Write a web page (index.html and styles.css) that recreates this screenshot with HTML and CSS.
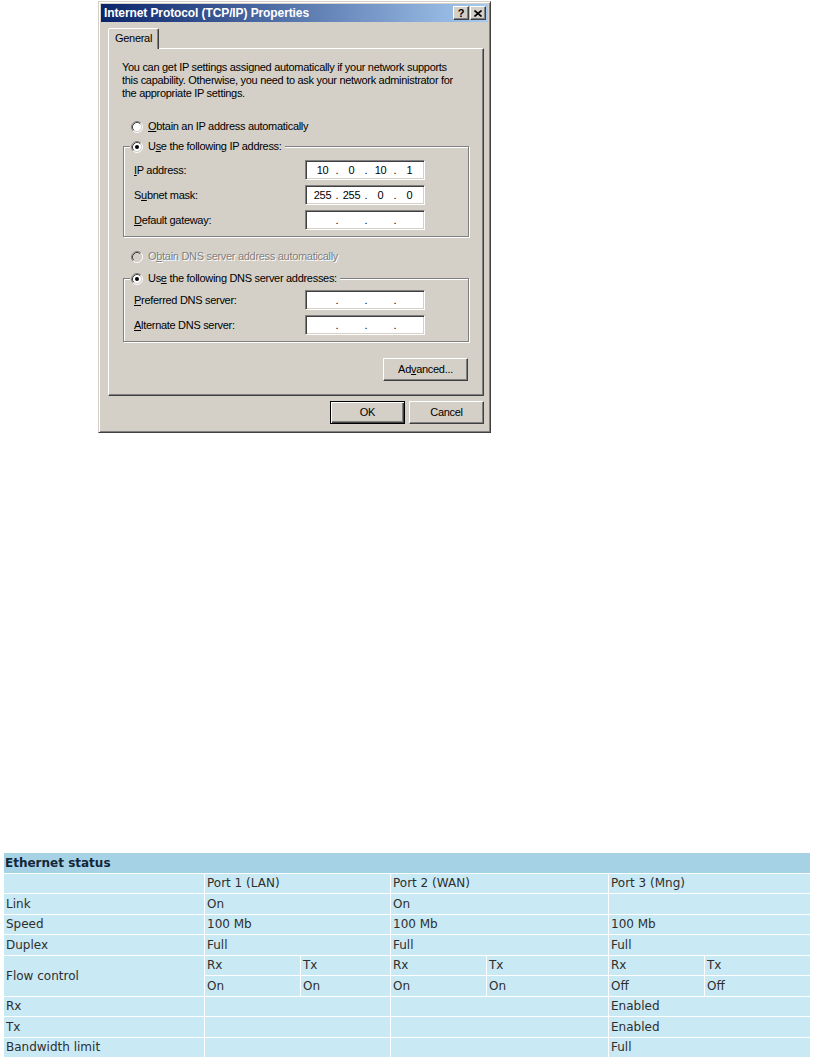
FILE: index.html
```html
<!DOCTYPE html>
<html>

<head>
    <title>Internet Protocol (TCP/IP) Properties</title>
    <link rel="stylesheet" href="styles.css">
</head>

<body>
    <div class="dialog">
        <div class="titlebar">
            <span class="title">Internet Protocol (TCP/IP) Properties</span>
            <span class="title-btns">
                <span class="tbtn help">?</span>
                <span class="tbtn">
                    <svg width="8" height="7" viewBox="0 0 8 7">
                        <path d="M0.5 0.5 L7.5 6.5 M7.5 0.5 L0.5 6.5" stroke="#000" stroke-width="1.6" fill="none" />
                    </svg>
                </span>
            </span>
        </div>

        <div class="dlg-body">
            <div class="tabs">
                <div class="tab">General</div>
            </div>

            <div class="panel">
                <p class="intro">
                    You can get IP settings assigned automatically if your network supports<br>
                    this capability. Otherwise, you need to ask your network administrator for<br>
                    the appropriate IP settings.
                </p>

                <div class="radio-row">
                    <svg class="radio" width="12" height="12" viewBox="0 0 12 12">
                        <circle cx="6" cy="6" r="4.5" fill="#fff" />
                        <path d="M2.11 9.89 A5.5 5.5 0 0 1 9.89 2.11" stroke="#808080" fill="none" />
                        <path d="M9.89 2.11 A5.5 5.5 0 0 1 2.11 9.89" stroke="#fff" fill="none" />
                        <path d="M2.82 9.18 A4.5 4.5 0 0 1 9.18 2.82" stroke="#404040" fill="none" />
                        <path d="M9.18 2.82 A4.5 4.5 0 0 1 2.82 9.18" stroke="#d4d0c8" fill="none" />
                    </svg>
                    <span><u>O</u>btain an IP address automatically</span>
                </div>

                <div class="group first">
                    <div class="group-head">
                        <svg class="radio" width="12" height="12" viewBox="0 0 12 12">
                            <circle cx="6" cy="6" r="4.5" fill="#fff" />
                            <path d="M2.11 9.89 A5.5 5.5 0 0 1 9.89 2.11" stroke="#808080" fill="none" />
                            <path d="M9.89 2.11 A5.5 5.5 0 0 1 2.11 9.89" stroke="#fff" fill="none" />
                            <path d="M2.82 9.18 A4.5 4.5 0 0 1 9.18 2.82" stroke="#404040" fill="none" />
                            <path d="M9.18 2.82 A4.5 4.5 0 0 1 2.82 9.18" stroke="#d4d0c8" fill="none" />
                            <circle cx="6" cy="6" r="2" fill="#000" />
                        </svg>
                        <span>U<u>s</u>e the following IP address:</span>
                    </div>
                    <div class="field-rows">
                        <div class="field">
                            <span class="field-label"><u>I</u>P address:</span>
                            <span class="ip">
                                <span class="seg">10</span><span class="dot">.</span><span class="seg">0</span><span class="dot">.</span><span class="seg">10</span><span class="dot">.</span><span class="seg">1</span>
                            </span>
                        </div>
                        <div class="field">
                            <span class="field-label">S<u>u</u>bnet mask:</span>
                            <span class="ip">
                                <span class="seg">255</span><span class="dot">.</span><span class="seg">255</span><span class="dot">.</span><span class="seg">0</span><span class="dot">.</span><span class="seg">0</span>
                            </span>
                        </div>
                        <div class="field">
                            <span class="field-label"><u>D</u>efault gateway:</span>
                            <span class="ip">
                                <span class="seg"></span><span class="dot">.</span><span class="seg"></span><span class="dot">.</span><span class="seg"></span><span class="dot">.</span><span class="seg"></span>
                            </span>
                        </div>
                    </div>
                </div>

                <div class="radio-row disabled">
                    <svg class="radio" width="12" height="12" viewBox="0 0 12 12">
                        <circle cx="6" cy="6" r="4.5" fill="#d4d0c8" />
                        <path d="M2.11 9.89 A5.5 5.5 0 0 1 9.89 2.11" stroke="#808080" fill="none" />
                        <path d="M9.89 2.11 A5.5 5.5 0 0 1 2.11 9.89" stroke="#fff" fill="none" />
                        <path d="M2.82 9.18 A4.5 4.5 0 0 1 9.18 2.82" stroke="#404040" fill="none" />
                        <path d="M9.18 2.82 A4.5 4.5 0 0 1 2.82 9.18" stroke="#d4d0c8" fill="none" />
                    </svg>
                    <span>O<u>b</u>tain DNS server address automatically</span>
                </div>

                <div class="group second">
                    <div class="group-head">
                        <svg class="radio" width="12" height="12" viewBox="0 0 12 12">
                            <circle cx="6" cy="6" r="4.5" fill="#fff" />
                            <path d="M2.11 9.89 A5.5 5.5 0 0 1 9.89 2.11" stroke="#808080" fill="none" />
                            <path d="M9.89 2.11 A5.5 5.5 0 0 1 2.11 9.89" stroke="#fff" fill="none" />
                            <path d="M2.82 9.18 A4.5 4.5 0 0 1 9.18 2.82" stroke="#404040" fill="none" />
                            <path d="M9.18 2.82 A4.5 4.5 0 0 1 2.82 9.18" stroke="#d4d0c8" fill="none" />
                            <circle cx="6" cy="6" r="2" fill="#000" />
                        </svg>
                        <span>Us<u>e</u> the following DNS server addresses:</span>
                    </div>
                    <div class="field-rows">
                        <div class="field">
                            <span class="field-label"><u>P</u>referred DNS server:</span>
                            <span class="ip">
                                <span class="seg"></span><span class="dot">.</span><span class="seg"></span><span class="dot">.</span><span class="seg"></span><span class="dot">.</span><span class="seg"></span>
                            </span>
                        </div>
                        <div class="field">
                            <span class="field-label"><u>A</u>lternate DNS server:</span>
                            <span class="ip">
                                <span class="seg"></span><span class="dot">.</span><span class="seg"></span><span class="dot">.</span><span class="seg"></span><span class="dot">.</span><span class="seg"></span>
                            </span>
                        </div>
                    </div>
                </div>

                <div class="adv-row">
                    <button class="btn advanced">Ad<u>v</u>anced...</button>
                </div>
            </div>

            <div class="btn-row">
                <button class="btn default">OK</button>
                <button class="btn">Cancel</button>
            </div>
        </div>
    </div>

    <table class="eth">
        <colgroup>
            <col class="c1">
            <col class="c2">
            <col class="c3">
            <col class="c4">
            <col class="c5">
            <col class="c6">
            <col class="c7">
        </colgroup>
        <tr>
            <th colspan="7">Ethernet status</th>
        </tr>
        <tr>
            <td></td>
            <td colspan="2">Port 1 (LAN)</td>
            <td colspan="2">Port 2 (WAN)</td>
            <td colspan="2">Port 3 (Mng)</td>
        </tr>
        <tr>
            <td>Link</td>
            <td colspan="2">On</td>
            <td colspan="2">On</td>
            <td colspan="2"></td>
        </tr>
        <tr>
            <td>Speed</td>
            <td colspan="2">100 Mb</td>
            <td colspan="2">100 Mb</td>
            <td colspan="2">100 Mb</td>
        </tr>
        <tr>
            <td>Duplex</td>
            <td colspan="2">Full</td>
            <td colspan="2">Full</td>
            <td colspan="2">Full</td>
        </tr>
        <tr>
            <td rowspan="2">Flow control</td>
            <td>Rx</td>
            <td>Tx</td>
            <td>Rx</td>
            <td>Tx</td>
            <td>Rx</td>
            <td>Tx</td>
        </tr>
        <tr>
            <td>On</td>
            <td>On</td>
            <td>On</td>
            <td>On</td>
            <td>Off</td>
            <td>Off</td>
        </tr>
        <tr>
            <td>Rx</td>
            <td colspan="2"></td>
            <td colspan="2"></td>
            <td colspan="2">Enabled</td>
        </tr>
        <tr>
            <td>Tx</td>
            <td colspan="2"></td>
            <td colspan="2"></td>
            <td colspan="2">Enabled</td>
        </tr>
        <tr>
            <td>Bandwidth limit</td>
            <td colspan="2"></td>
            <td colspan="2"></td>
            <td colspan="2">Full</td>
        </tr>
    </table>
</body>

</html>
```

FILE: styles.css
```css
body {
    margin: 0;
    background-color: #fff;
}

/* dialog window */
.dialog {
    width: 393px;
    box-sizing: border-box;
    margin: 1px 0 0 98px;
    padding: 2px;
    background-color: #d4d0c8;
    border: 1px solid;
    border-color: #d4d0c8 #404040 #404040 #d4d0c8;
    box-shadow: inset 1px 1px #fff, inset -1px -1px #808080;
    font-family: "Liberation Sans", Arial, sans-serif;
    font-size: 11px;
    line-height: 13px;
    letter-spacing: -0.3px;
    color: #000;
}

.titlebar {
    height: 18px;
    display: flex;
    align-items: center;
    justify-content: space-between;
    padding: 0 2px 0 3px;
    background: linear-gradient(to right, #0a246a, #a6caf0);
}

.title {
    color: #fff;
    font-weight: bold;
    font-size: 12px;
    letter-spacing: -0.1px;
}

.title-btns {
    display: flex;
    gap: 1px;
}

.tbtn {
    width: 16px;
    height: 14px;
    box-sizing: border-box;
    display: flex;
    align-items: center;
    justify-content: center;
    background-color: #d4d0c8;
    border: 1px solid;
    border-color: #fff #404040 #404040 #fff;
    box-shadow: inset -1px -1px #808080;
}

.tbtn.help {
    font-weight: bold;
    font-size: 11px;
    letter-spacing: 0;
}

.dlg-body {
    padding: 6px 4px 6px 7px;
}

.tabs {
    display: flex;
}

.tab {
    position: relative;
    z-index: 1;
    height: 21px;
    box-sizing: border-box;
    margin-bottom: -1px;
    padding: 3px 6px 0 6px;
    background-color: #d4d0c8;
    border: 1px solid;
    border-bottom: none;
    border-color: #fff #404040 transparent #fff;
    border-radius: 2px 2px 0 0;
    box-shadow: inset -1px 0 #808080;
}

.panel {
    height: 348px;
    box-sizing: border-box;
    border: 1px solid;
    border-color: #fff #404040 #404040 #fff;
    box-shadow: inset -1px -1px #808080;
}

.intro {
    margin: 12px 0 0 13px;
    white-space: nowrap;
}

.radio-row {
    display: flex;
    align-items: center;
    gap: 5px;
    height: 13px;
    margin: 20px 0 0 22px;
}

.radio-row.disabled {
    margin-top: 13px;
    color: #808080;
    text-shadow: 1px 1px #fff;
}

.radio {
    flex: none;
}

/* etched group box */
.group {
    margin: 13px 14px 0;
    padding: 0 0 6px 10px;
    border: 1px solid #808080;
    box-shadow: 1px 1px 0 #fff, inset 1px 1px 0 #fff;
}

.group.second {
    margin-top: 15px;
}

.group-head {
    display: flex;
    align-items: center;
    gap: 5px;
    width: fit-content;
    height: 13px;
    margin: -7px 0 0 -4px;
    padding: 0 3px 0 1px;
    background-color: #d4d0c8;
}

.field-rows {
    display: flex;
    flex-direction: column;
    gap: 5px;
    margin-top: 7px;
}

.group.second .field-rows {
    margin-top: 5px;
}

.field {
    display: flex;
    align-items: center;
}

.field-label {
    width: 171px;
}

.ip {
    width: 120px;
    height: 20px;
    box-sizing: border-box;
    display: flex;
    align-items: center;
    padding-left: 6px;
    background-color: #fff;
    border: 1px solid;
    border-color: #808080 #fff #fff #808080;
    box-shadow: inset 1px 1px #404040, inset -1px -1px #d4d0c8;
}

.seg {
    width: 21px;
    text-align: center;
}

.dot {
    width: 8px;
    text-align: center;
}

.adv-row {
    display: flex;
    justify-content: flex-end;
    margin: 16px 15px 0 0;
}

.btn {
    width: 75px;
    height: 23px;
    box-sizing: border-box;
    padding: 0;
    font: inherit;
    letter-spacing: inherit;
    color: #000;
    background-color: #d4d0c8;
    border: 1px solid;
    border-color: #fff #404040 #404040 #fff;
    box-shadow: inset -1px -1px #808080;
}

.btn.advanced {
    width: 85px;
}

.btn.default {
    border-color: #000;
    box-shadow: inset 1px 1px #fff, inset -1px -1px #404040, inset -2px -2px #808080;
}

.btn-row {
    display: flex;
    justify-content: flex-end;
    gap: 4px;
    margin-top: 5px;
}

/* ethernet status table */
.eth {
    margin: 419px 0 0 3px;
    width: 808px;
    table-layout: fixed;
    border-spacing: 1px;
    font-family: "DejaVu Sans", Verdana, sans-serif;
    font-size: 12px;
    color: #2e2e2e;
}

.c1 { width: 200px; }
.c2 { width: 95px; }
.c3 { width: 89px; }
.c4 { width: 95px; }
.c5 { width: 121px; }
.c6 { width: 95px; }
.c7 { width: 105px; }

.eth th {
    height: 19.5px;
    padding: 0 1px;
    text-align: left;
    background-color: #a6d2e5;
    color: #13263a;
}

.eth td {
    height: 19.5px;
    padding: 0 2px;
    white-space: nowrap;
    background-color: #c9e9f5;
}
```
